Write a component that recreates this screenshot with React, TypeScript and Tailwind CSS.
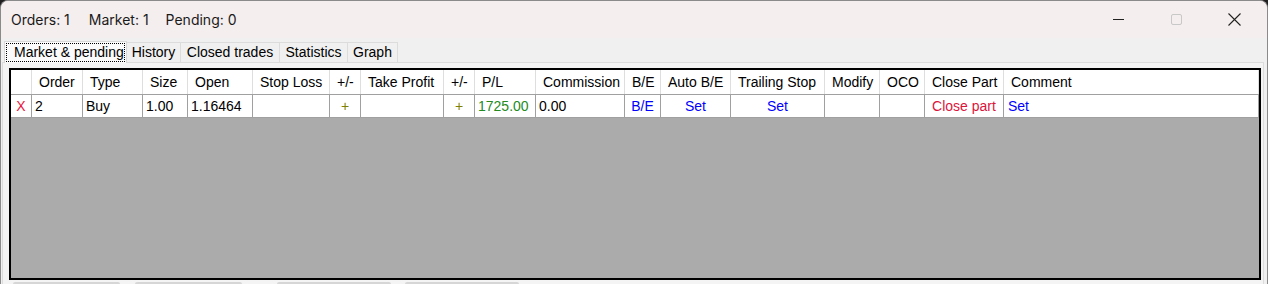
const columns = [
  { label: "", w: "w-[21px]" },
  { label: "Order", w: "w-[51px]" },
  { label: "Type", w: "w-[60px]" },
  { label: "Size", w: "w-[45px]" },
  { label: "Open", w: "w-[65px]" },
  { label: "Stop Loss", w: "w-[77px]" },
  { label: "+/-", w: "w-[31px]" },
  { label: "Take Profit", w: "w-[83px]" },
  { label: "+/-", w: "w-[31px]" },
  { label: "P/L", w: "w-[61px]" },
  { label: "Commission", w: "w-[89px]" },
  { label: "B/E", w: "w-[36px]" },
  { label: "Auto B/E", w: "w-[70px]" },
  { label: "Trailing Stop", w: "w-[94px]" },
  { label: "Modify", w: "w-[55px]" },
  { label: "OCO", w: "w-[45px]" },
  { label: "Close Part", w: "w-[79px]" },
  { label: "Comment", w: "flex-1" },
];

const row = [
  { text: "X", cls: "justify-center text-[#e8173f]" },
  { text: "2", cls: "pl-[3px]" },
  { text: "Buy", cls: "pl-[3px]" },
  { text: "1.00", cls: "pl-[3px]" },
  { text: "1.16464", cls: "pl-[3px]" },
  { text: "", cls: "" },
  { text: "+", cls: "justify-center text-[#808000]" },
  { text: "", cls: "" },
  { text: "+", cls: "justify-center text-[#808000]" },
  { text: "1725.00", cls: "pl-[3px] text-[#228b22]" },
  { text: "0.00", cls: "pl-[3px]" },
  { text: "B/E", cls: "justify-center text-[#0000ff]" },
  { text: "Set", cls: "justify-center text-[#0000ff]" },
  { text: "Set", cls: "justify-center text-[#0000ff]" },
  { text: "", cls: "" },
  { text: "", cls: "" },
  { text: "Close part", cls: "justify-center text-[#dc143c]" },
  { text: "Set", cls: "pl-[4px] text-[#0000ff]" },
];

const tabs = [
  { label: "History", w: "w-[54px]" },
  { label: "Closed trades", w: "w-[99px]" },
  { label: "Statistics", w: "w-[68px]" },
  { label: "Graph", w: "w-[50px]" },
];

export default function App() {
  return (
    <div className="w-[1268px] h-[284px] overflow-hidden bg-[#202020]">
      <div className="h-[290px] rounded-t-[8px] border-t border-x border-[#8a8a8a] bg-[#f0f0f0] overflow-hidden">
        {/* title bar */}
        <div className="h-[37px] bg-[#f5eeee] flex items-center font-['Inter',sans-serif] text-[14px] text-[#1a1a1a]">
          <div className="pl-[10px] flex">
            <span>Orders: 1</span>
            <span className="ml-[19px]">Market: 1</span>
            <span className="ml-[17px]">Pending: 0</span>
          </div>
          <div className="ml-auto flex items-center h-full">
            <div className="w-[58px] h-full flex items-center justify-center">
              <div className="w-[11px] h-px bg-[#222]" />
            </div>
            <div className="w-[58px] h-full flex items-center justify-center">
              <div className="w-[11px] h-[11px] border border-[#c8c8c8] rounded-[2px]" />
            </div>
            <div className="w-[58px] h-full flex items-center justify-center mr-[4px]">
              <svg width="13" height="13" viewBox="0 0 13 13" fill="none" stroke="#222" strokeWidth="1.1">
                <path d="M0.5 0.5 L12.5 12.5 M12.5 0.5 L0.5 12.5" />
              </svg>
            </div>
          </div>
        </div>

        {/* tabs */}
        <div className="font-['Liberation_Sans',Arial,sans-serif] text-[14px] text-black">
          <div className="flex items-end h-[24px] pl-[3px] pt-[2px]">
            <div className="w-[123px] h-[22px] bg-[#fbfbfb] border-x border-t border-[#d8d8d8] relative z-10 -mb-px">
              <div className="absolute inset-[1px] border border-dotted border-black flex items-center pl-[7px] whitespace-nowrap">
                Market &amp; pending
              </div>
            </div>
            {tabs.map((t, i) => (
              <div
                key={i}
                className={`${t.w} h-[20px] bg-[#f0f0f0] border-r border-t border-[#dcdcdc] flex items-center justify-center whitespace-nowrap`}
              >
                {t.label}
              </div>
            ))}
          </div>

          {/* tab page */}
          <div className="mx-[1px] mr-[3px] h-[230px] bg-[#f4f4f4] border border-[#dcdcdc] pt-[5px] pl-[6px]">
            <div className="w-[1252px] h-[212px] border-2 border-black bg-[#ababab] flex flex-col">
              <div className="flex h-[25px] bg-white border-b border-[#a0a0a0]">
                {columns.map((c, i) => (
                  <div
                    key={i}
                    className={`${c.w} shrink-0 border-r border-[#dedede] flex items-center pl-[7px] whitespace-nowrap`}
                  >
                    {c.label}
                  </div>
                ))}
              </div>
              <div className="flex h-[23px] bg-white border-b border-[#a0a0a0]">
                {row.map((c, i) => (
                  <div
                    key={i}
                    className={`${columns[i].w} shrink-0 border-r border-[#a0a0a0] flex items-center whitespace-nowrap ${c.cls}`}
                  >
                    {c.text}
                  </div>
                ))}
              </div>
            </div>
            <div className="flex mt-[2px] -ml-[6px]">
              <div className="ml-[10px] w-[107px] h-[10px] bg-[#d6d6d6] rounded-[2px]" />
              <div className="ml-[15px] w-[107px] h-[10px] bg-[#d6d6d6] rounded-[2px]" />
              <div className="ml-[35px] w-[114px] h-[10px] bg-[#d6d6d6] rounded-[2px]" />
              <div className="ml-[14px] w-[114px] h-[10px] bg-[#d6d6d6] rounded-[2px]" />
            </div>
          </div>
        </div>
      </div>
    </div>
  );
}
